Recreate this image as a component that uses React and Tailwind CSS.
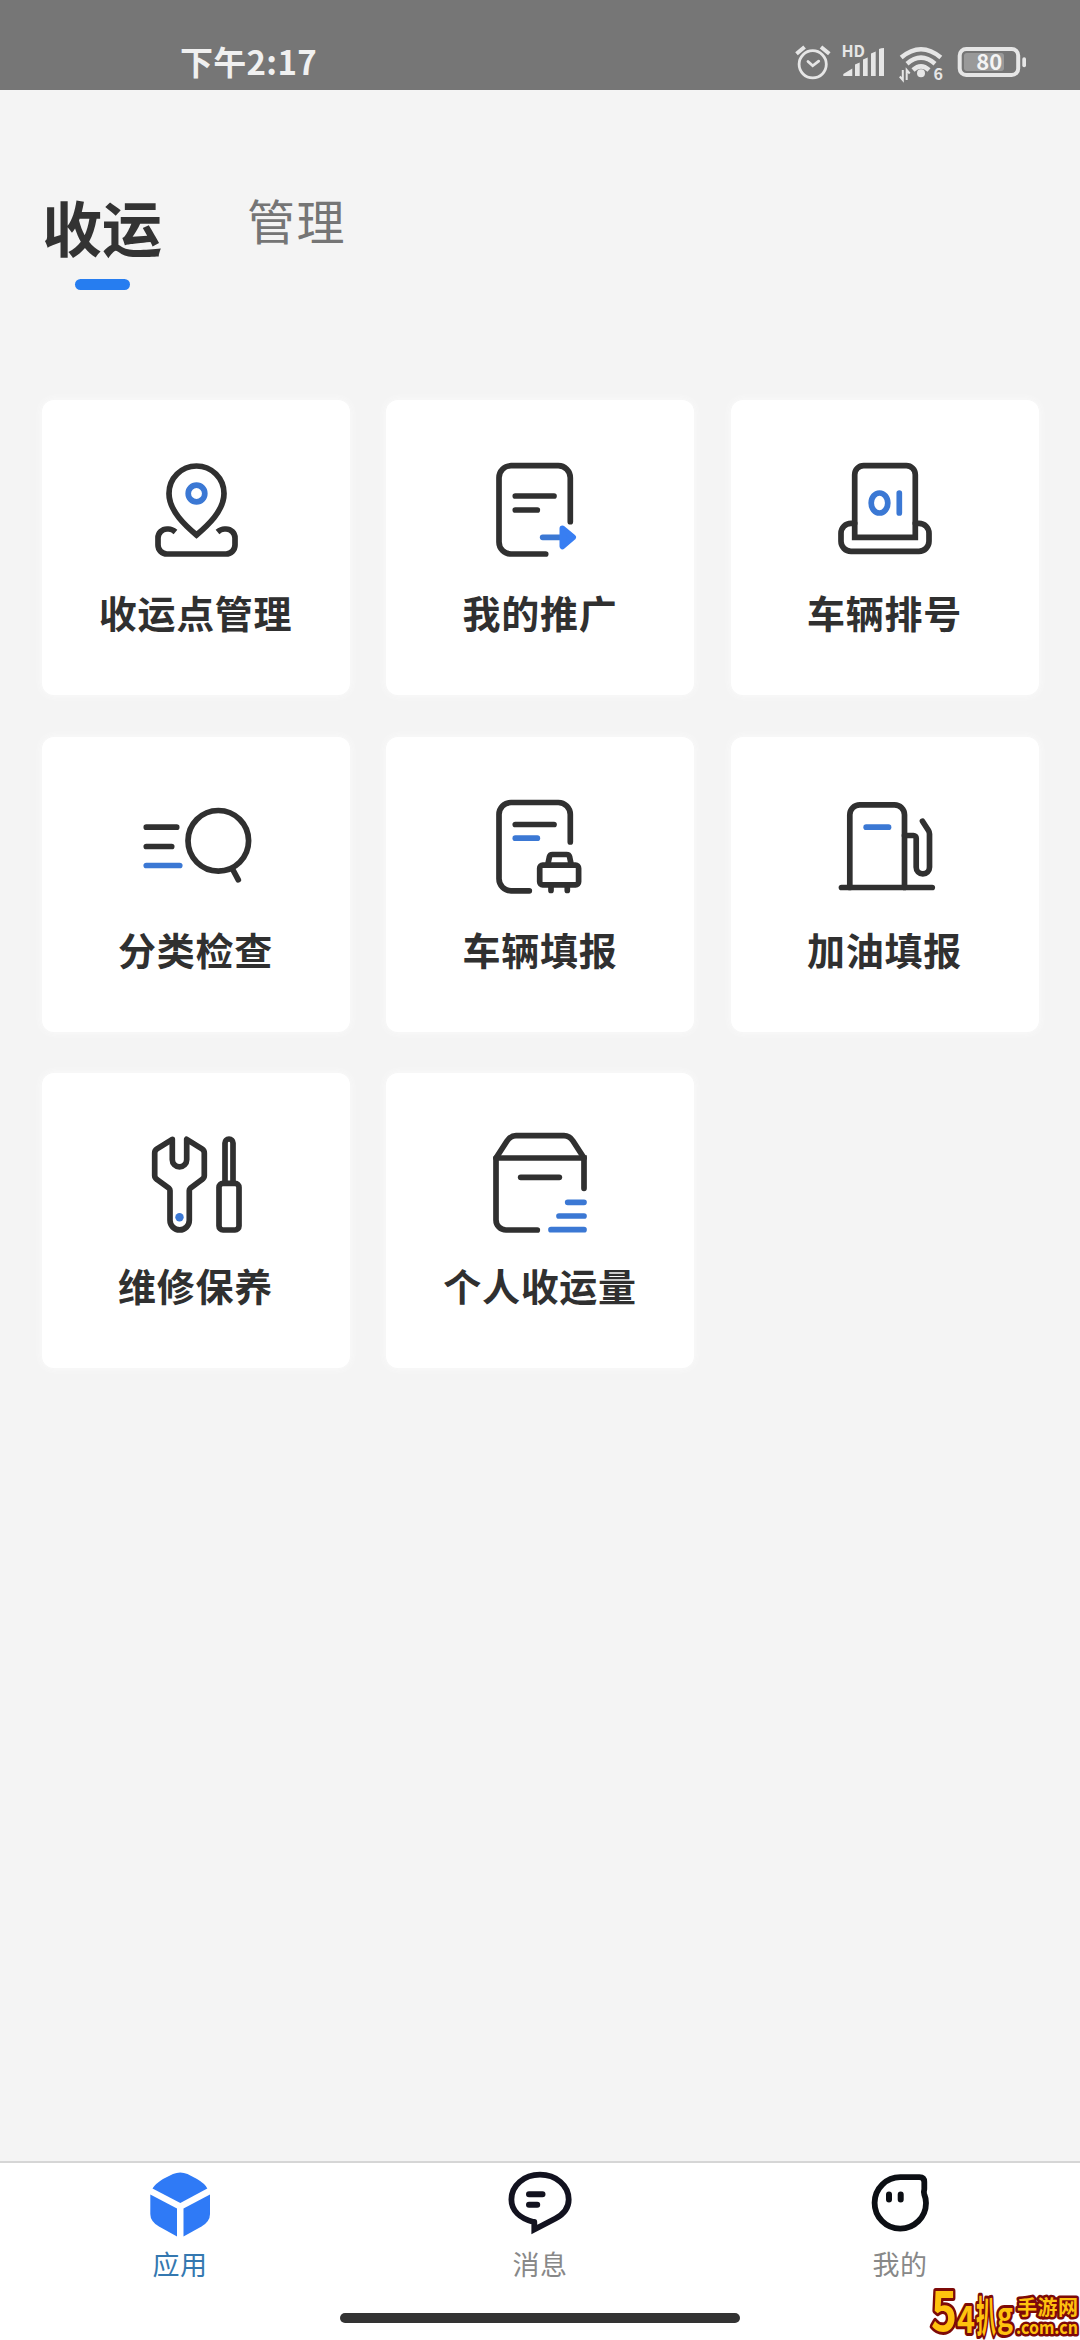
import { useState } from 'react';

const DARK = '#303030';
const BLUE = '#3b78d4';

// shared frame for the menu icons, 120x110 with round caps
function Icon({ children }) {
  return (
    <svg width="120" height="110" viewBox="0 0 120 110" fill="none" stroke={DARK} strokeWidth="5.700" strokeLinecap="round">
      {children}
    </svg>
  );
}

const PinIcon = () => (
  <Icon>
    <path d="M60.500 80C50 71 33 56 33 38.500a27.500 27.500 0 0 1 55 0C88 56 71 71 60.500 80z" />
    <circle cx="60.500" cy="38.500" r="8.300" stroke={BLUE} />
    <path strokeLinecap="butt" d="M39.500 77Q36 74 32.500 74H31a9 9 0 0 0-9 9v7a9 9 0 0 0 9 9h59a9 9 0 0 0 9-9v-7a9 9 0 0 0-9-9h-1.500Q85 74 81.500 77" />
  </Icon>
);

const PromoteIcon = () => (
  <Icon>
    <path d="M90.300 66.700V22.700a12 12 0 0 0-12-12H31a12 12 0 0 0-12 12V87a12 12 0 0 0 12 12h34.700" />
    <path d="M35.300 41H74M35.300 55h22" />
    <path stroke={BLUE} d="M62.700 82.300H80" />
    <path stroke="#387ef2" fill="#387ef2" strokeWidth="6" strokeLinejoin="round" d="M82.500 73.500L93 82.300L82.500 91.300z" />
  </Icon>
);

const QueueIcon = () => (
  <Icon>
    <path d="M29.700 82.300V19.700a9 9 0 0 1 9-9h42.600a9 9 0 0 1 9 9v62.600z" />
    <path d="M29.700 68.300H26a10 10 0 0 0-10 10v8a10 10 0 0 0 10 10h68a10 10 0 0 0 10-10v-8a10 10 0 0 0-10-10h-3.700" />
    <ellipse cx="54.500" cy="48" rx="8.300" ry="10" stroke={BLUE} />
    <path stroke={BLUE} d="M74.300 38v20" />
  </Icon>
);

const InspectIcon = () => (
  <Icon>
    <path d="M10.300 35.200h30.400M10.300 54.500h25.400" />
    <path stroke={BLUE} d="M10.300 73.500h33.400" />
    <circle cx="82.300" cy="48.800" r="30.300" />
    <path d="M96.500 77L102.300 87.800" />
  </Icon>
);

const VehicleIcon = () => (
  <Icon>
    <path d="M90.300 50V22.500a12 12 0 0 0-12-12H31a12 12 0 0 0-12 12v64.300a12 12 0 0 0 12 12h18.300" />
    <path d="M35.300 32.500H74" />
    <path stroke={BLUE} d="M35.300 46.200h22" />
    <rect x="59.700" y="73.200" width="38.900" height="19.600" rx="3" />
    <path d="M67.700 73L69.400 64.800Q70 62.500 72.500 62.500H86.500Q89 62.500 89.600 64.800L91.300 73" />
    <path d="M71 94v4.500M87.300 94v4.500" />
  </Icon>
);

const FuelIcon = () => (
  <Icon>
    <path d="M24.800 95.500V22.800a10 10 0 0 1 10-10h34.700a10 10 0 0 1 10 10v72.700" />
    <path d="M16.500 95.500h90.700" />
    <path stroke={BLUE} d="M41.200 35.200h22.300" />
    <path d="M79.500 43.500H88.500a2.700 2.700 0 0 1 2.700 2.700V75.200a6.650 6.650 0 0 0 13.300 0V42q0-2-1-3.600L97.500 29.200" />
  </Icon>
);

const RepairIcon = () => (
  <Icon>
    <path strokeLinejoin="round" d="M36.300 11.300L21 20.800Q18.700 22.300 18.700 25V47.500Q18.700 50 21 51.500L33 60.300Q34 61.200 34 62.500V92.300a9.650 9.650 0 0 0 19.300 0V62.500Q53.300 61.200 54.300 60.300L66 51.500Q68.300 50 68.300 47.500V25Q68.300 22.300 66 20.800L50.700 11.300V31.700a7.200 7.200 0 0 1-14.400 0z" />
    <circle cx="43.500" cy="89.300" r="4.200" fill={BLUE} stroke="none" />
    <path d="M89 54V15a4 4 0 0 1 8 0v39" />
    <rect x="83" y="55.300" width="20" height="46.700" rx="4" />
  </Icon>
);

const BoxIcon = () => (
  <Icon>
    <path d="M16 30L27 13Q30.500 7.700 36 7.700H84Q89.500 7.700 93 13L104 30" />
    <path d="M16 30H104V60.300M16 30V92a10 10 0 0 0 10 10h31.300" />
    <path d="M40.700 49.300h38.600" />
    <path stroke={BLUE} d="M87.700 74.300H104M79 88h25M71 101.700h33" />
  </Icon>
);

const menus = [
  { name: '收运点管理', icon: PinIcon },
  { name: '我的推广', icon: PromoteIcon },
  { name: '车辆排号', icon: QueueIcon },
  { name: '分类检查', icon: InspectIcon },
  { name: '车辆填报', icon: VehicleIcon },
  { name: '加油填报', icon: FuelIcon },
  { name: '维修保养', icon: RepairIcon },
  { name: '个人收运量', icon: BoxIcon },
];

function StatusBar() {
  return (
    <div className="flex h-[90px] shrink-0 items-start justify-between bg-[#767676] pl-[180px] pr-[52px] text-[#f0f0f0]">
      <div className="mt-[37px] text-[33px] leading-[48px] font-bold tracking-[0.300px]">下午2:17</div>
      <div className="mt-[44px] flex">
        <svg width="38" height="38" fill="none" stroke="#e6e6e6" strokeWidth="2.800" strokeLinecap="round">
          <circle cx="18.700" cy="20.300" r="13.600" />
          <path d="M14 17.500l4.700 4.300l6-4.600" />
          <path strokeWidth="4" strokeLinecap="butt" d="M2.500 9.800L10.600 3M27 3l8.300 6.800" />
        </svg>
        <svg className="ml-2 overflow-visible" width="48" height="38" fill="#e6e6e6">
          <path d="M3.300 32v-2l9-5.500V32zM15 20.500l4.700-2V32H15zM23 15.500l4.700-2V32H23zM31 9.500l4.700-2V32H31zM39 5q2-1 5-1v28h-5z" />
          <text x="1.500" y="13.300" fontSize="16" fontWeight="700">HD</text>
        </svg>
        <svg className="ml-[10px] overflow-visible" width="48" height="38" fill="none" stroke="#e6e6e6" strokeWidth="4.500">
          <path d="M3.200 13.500Q23-3 42.800 13.500M9 19.800Q23 7.600 37 19.800M15 26Q23 18.600 31 26" />
          <circle cx="23" cy="29.300" r="4" fill="#e6e6e6" stroke="none" />
          <path strokeWidth="2" d="M4.800 26v10l-3-3.500M8.700 36V26l3 3.500" />
          <text x="35.500" y="36" fontSize="16" fontWeight="700" fill="#e6e6e6" stroke="none">6</text>
        </svg>
        <svg className="ml-[10px]" width="72" height="38">
          <rect x="8" y="9" width="40" height="18" rx="3" fill="#999" />
          <rect x="3.700" y="5" width="58.500" height="26" rx="6.500" fill="none" stroke="#e6e6e6" strokeWidth="4" />
          <rect x="66.300" y="13.300" width="3.700" height="10" rx="1.800" fill="#e6e6e6" />
          <text x="33.300" y="26.300" textAnchor="middle" fontSize="22" fontWeight="700" fill="#f4f4f4">80</text>
        </svg>
      </div>
    </div>
  );
}

const AppsIcon = () => (
  <svg width="64" height="66" viewBox="0 0 64 66" fill="#2f7af6">
    <path d="M4.500 17.500Q7 13 15 8L25 3Q32.300 0 39.500 3L49 8Q57.500 13 59.300 17.500L32.300 32z" />
    <path d="M2.300 23.500L29 37.500V65.500L11 55.500Q2.300 50.500 2.300 43z" />
    <path d="M62 23.500L35.500 37.500V65.500L53.500 55.500Q62 50.500 62 43z" />
  </svg>
);

const MessageIcon = () => (
  <svg width="64" height="66" viewBox="0 0 64 66" fill="none" stroke="#12121f" strokeWidth="5.800" strokeLinecap="round">
    <path d="M25.500 51C12 47.500 3.400 39.500 3.400 28.500C3.400 14.500 16 3.700 32 3.700S60.700 14.500 60.700 28.500C60.700 37 56 43 47.500 47.500L26.300 58.500V51" />
    <path strokeWidth="6" d="M21 23.300H34.500M21 33.700h8.200" />
  </svg>
);

const MineIcon = () => (
  <svg width="64" height="66" viewBox="0 0 64 66" fill="none" stroke="#0c0f14" strokeWidth="5.800" strokeLinecap="round">
    <path d="M32.500 6.200A25.700 25.700 0 1 0 58 32Q58 27.500 56.300 23.500Q55.500 21 56.300 18V11Q56.300 6.200 51.500 6.200z" strokeLinejoin="round" />
    <path strokeWidth="6" d="M21 23.500v5M32.700 23.500v5" />
  </svg>
);

const navs = [
  { name: '应用', icon: AppsIcon },
  { name: '消息', icon: MessageIcon },
  { name: '我的', icon: MineIcon },
];

function Watermark() {
  return (
    <div className="absolute right-0 bottom-0 h-[54px] w-[151px]">
      <svg className="overflow-visible" width="151" height="54" fill="#ffc20e" stroke="#7d0a08" strokeWidth="6" strokeLinejoin="round" paintOrder="stroke" fontWeight="700">
        <text x="2" y="45" fontSize="56" textLength="26" lengthAdjust="spacingAndGlyphs">5</text>
        <text x="28" y="47" fontSize="38" textLength="18" lengthAdjust="spacingAndGlyphs">4</text>
        <text x="47" y="46" fontSize="42" textLength="20" lengthAdjust="spacingAndGlyphs">扒</text>
        <text x="68" y="41" fontSize="34" textLength="16" lengthAdjust="spacingAndGlyphs">g</text>
        <text x="88" y="29" fontSize="20" strokeWidth="5" textLength="61">手游网</text>
        <text x="87" y="48" fontSize="18" strokeWidth="5" textLength="62" lengthAdjust="spacingAndGlyphs">.com.cn</text>
      </svg>
    </div>
  );
}

export default function App() {
  const [tab, setTab] = useState('收运');
  const [nav, setNav] = useState('应用');

  return (
    <div className="relative flex h-[2340px] w-[1080px] flex-col overflow-hidden bg-[#f4f4f4] font-['Noto_Sans_CJK_SC',sans-serif]">
      <StatusBar />

      <div className="flex h-[310px] shrink-0 pt-[91px] pl-[42px]">
        {['收运', '管理'].map(t => (
          <button key={t} onClick={() => setTab(t)} className="mr-[85px] flex flex-col items-center">
            {t === tab ? (
              <>
                <span className="text-[60px] leading-[90px] font-bold text-[#333]">{t}</span>
                <span className="mt-[8px] h-[11px] w-[55px] rounded-full bg-[#267df0]" />
              </>
            ) : (
              <span className="text-[48px] leading-[76px] tracking-[1.500px] text-[#757575]">{t}</span>
            )}
          </button>
        ))}
      </div>

      <div className="grid grid-cols-3 gap-x-[36.500px] gap-y-[41.500px] px-[41.500px]">
        {menus.map(({ name, icon: MenuIcon }) => (
          <div key={name} className="flex h-[295px] flex-col items-center rounded-[12px] bg-white pt-[55px] shadow-[0_0_8px_#fbfbfb]">
            <MenuIcon />
            <div className="mt-[19px] text-[38px] leading-[56px] font-bold tracking-[0.700px] text-[#303030]">{name}</div>
          </div>
        ))}
      </div>

      <div className="mt-auto flex h-[179px] shrink-0 flex-col items-center border-t-2 border-[#d6d6d6] bg-white">
        <div className="grid w-full grid-cols-3 pt-[8px]">
          {navs.map(({ name, icon: NavIcon }) => (
            <button key={name} onClick={() => setNav(name)} className="flex flex-col items-center">
              <NavIcon />
              <span className={`mt-[7px] text-[27px] leading-[40px] tracking-[0.500px] ${name === nav ? 'text-[#3478b0]' : 'text-[#888]'}`}>{name}</span>
            </button>
          ))}
        </div>
        <div className="mt-[29px] h-[10px] w-[400px] rounded-full bg-[#333]" />
      </div>

      <Watermark />
    </div>
  );
}
